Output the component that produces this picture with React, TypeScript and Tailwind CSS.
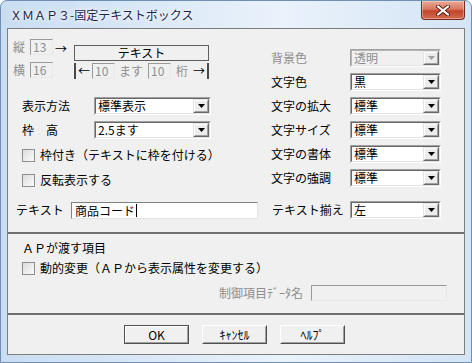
import React from "react";

const FONT = '"Noto Sans CJK JP", "Noto Sans", sans-serif';

function Tri({ disabled }: { disabled?: boolean }) {
  return (
    <svg width="7" height="4" viewBox="0 0 7 4">
      <path d="M0 0H7L3.5 4Z" fill={disabled ? "#a0a0a0" : "#000"} />
    </svg>
  );
}

function Select({ value, cls, disabled }: { value: string; cls: string; disabled?: boolean }) {
  return (
    <div
      className={`${cls} h-[18px] flex border border-t-[#a0a0a0] border-l-[#a0a0a0] border-b-white border-r-white`}
    >
      <div
        className={`flex flex-1 min-w-0 border ${
          disabled
            ? "border-t-[#b5b5b5] border-l-[#b5b5b5] border-b-[#e3e3e3] border-r-[#e3e3e3] bg-[#f0f0f0]"
            : "border-t-[#696969] border-l-[#696969] border-b-[#e3e3e3] border-r-[#e3e3e3] bg-white"
        }`}
      >
        <span
          className={`flex-1 pl-[2px] text-[12px] leading-[14px] whitespace-nowrap ${
            disabled ? "text-[#8e8e8e]" : "text-black"
          }`}
        >
          {value}
        </span>
        <div className="w-[16px] h-full flex border border-t-[#e3e3e3] border-l-[#e3e3e3] border-b-[#696969] border-r-[#696969]">
          <div className="flex-1 flex items-center justify-center bg-[#ececec] border border-t-white border-l-white border-b-[#a0a0a0] border-r-[#a0a0a0]">
            <Tri disabled={disabled} />
          </div>
        </div>
      </div>
    </div>
  );
}

function SmallInput({ v }: { v: string }) {
  return (
    <div className="w-[23px] h-[16px] border border-t-[#9a9a9a] border-l-[#9a9a9a] border-b-[#e8e8e8] border-r-[#e8e8e8] bg-[#f0f0f0] flex items-center pl-[2px]">
      <span className="text-[12px] leading-[14px] text-[#8e8e8e]">{v}</span>
    </div>
  );
}

function Check({ label }: { label: string }) {
  return (
    <div className="flex items-center h-[16px]">
      <div className="w-[13px] h-[13px] border border-[#8e8f8f] bg-[linear-gradient(135deg,#dcdcdc,#fbfbfb)]" />
      <span className="ml-[5px] text-[12px] leading-[16px] whitespace-nowrap">{label}</span>
    </div>
  );
}

function Btn({ label, def }: { label: string; def?: boolean }) {
  return (
    <div
      className={`w-[65px] h-[19px] flex border ${
        def ? "border-[#505050]" : "border-t-white border-l-white border-b-[#505050] border-r-[#505050]"
      }`}
    >
      <div
        className={`flex-1 flex items-center justify-center bg-[#f0f0f0] border ${
          def
            ? "border-t-white border-l-white border-b-[#a0a0a0] border-r-[#a0a0a0]"
            : "border-t-[#f0f0f0] border-l-[#f0f0f0] border-b-[#a0a0a0] border-r-[#a0a0a0]"
        }`}
      >
        <span className="text-[12px] leading-[14px]">{label}</span>
      </div>
    </div>
  );
}

function RightRow({ label, value, disabled }: { label: string; value: string; disabled?: boolean }) {
  return (
    <div className="flex items-center h-[18px]">
      <span
        className={`w-[79px] text-[12px] leading-[16px] whitespace-nowrap ${
          disabled ? "text-[#8e8e8e]" : "text-black"
        }`}
      >
        {label}
      </span>
      <Select value={value} cls="w-[91px]" disabled={disabled} />
    </div>
  );
}

export default function App() {
  return (
    <div
      className="w-[472px] h-[363px] flex flex-col overflow-hidden rounded-t-[7px] border border-[#6f8fb5] bg-[linear-gradient(90deg,#c9ddf2_0%,#dfebf8_40%,#eaf2fb_60%,#d3e4f5_100%)] text-black"
      style={{ fontFamily: FONT }}
    >
      {/* Title bar */}
      <div className="h-[27px] flex items-start">
        <span className="ml-[9px] mt-[6px] text-[12px] leading-[16px] text-[#1a2544] [text-shadow:0_0_6px_#fff,0_0_3px_#fff] whitespace-nowrap">
          ＸＭＡＰ３-固定テキストボックス
        </span>
        <div className="ml-auto mr-[6px] w-[44px] h-[19px] rounded-b-[4px] border border-[#7a2a1e] border-t-0 bg-[linear-gradient(180deg,#e9a996_0%,#d8785f_45%,#c3452b_55%,#d06a4f_100%)] flex items-center justify-center shadow-[inset_0_0_0_1px_rgba(255,255,255,0.35)]">
          <svg width="14" height="11" viewBox="0 0 14 11">
            <path d="M2 1.5L12 9.5M12 1.5L2 9.5" stroke="#5a2016" strokeWidth="4" strokeLinecap="round" />
            <path d="M2 1.5L12 9.5M12 1.5L2 9.5" stroke="#fff" strokeWidth="2.2" strokeLinecap="round" />
          </svg>
        </div>
      </div>

      {/* Content */}
      <div className="ml-[6px] w-[458px] h-[327px] border border-[#7d7d7d] bg-[#f0f0f0] flex flex-col">
        {/* Section 1 */}
        <div className="h-[203px] flex flex-col">
          <div className="h-[159px] flex">
            {/* Left column */}
            <div className="w-[254px] flex flex-col pt-[10px]">
              <div className="flex h-[40px] pl-[5px]">
                <div className="flex flex-col gap-[7px]">
                  <div className="flex items-center h-[16px]">
                    <span className="w-[12px] text-[12px] leading-[16px] text-[#8e8e8e]">縦</span>
                    <div className="ml-[5px]">
                      <SmallInput v="13" />
                    </div>
                  </div>
                  <div className="flex items-center h-[16px]">
                    <span className="w-[12px] text-[12px] leading-[16px] text-[#8e8e8e]">横</span>
                    <div className="ml-[5px]">
                      <SmallInput v="16" />
                    </div>
                  </div>
                </div>
                <span className="ml-[2px] mt-[2px] w-[12px] h-[16px] text-[12px] leading-[16px]">→</span>
                <div className="ml-[7px] mt-[6px] flex flex-col">
                  <div className="w-[135px] h-[16px] border border-[#5e5e5e] flex items-center justify-center">
                    <span className="text-[12px] leading-[14px]">テキスト</span>
                  </div>
                  <div className="mt-[2px] flex items-center h-[16px]">
                    <div className="w-[2px] h-[16px] bg-[#4a4a4a]" />
                    <span className="ml-[2px] w-[12px] text-[12px] leading-[16px]">←</span>
                    <div className="ml-[2px]">
                      <SmallInput v="10" />
                    </div>
                    <span className="ml-[4px] w-[24px] text-[12px] leading-[16px] text-[#8e8e8e]">ます</span>
                    <div className="ml-[5px]">
                      <SmallInput v="10" />
                    </div>
                    <span className="ml-[5px] w-[12px] text-[12px] leading-[16px] text-[#8e8e8e]">桁</span>
                    <span className="ml-[5px] w-[12px] text-[12px] leading-[16px]">→</span>
                    <div className="ml-[2px] w-[2px] h-[16px] bg-[#4a4a4a]" />
                  </div>
                </div>
              </div>

              <div className="mt-[18px] flex items-center h-[18px] pl-[14px]">
                <span className="w-[72px] text-[12px] leading-[16px]">表示方法</span>
                <Select value="標準表示" cls="w-[117px]" />
              </div>
              <div className="mt-[6px] flex items-center h-[18px] pl-[14px]">
                <span className="w-[72px] text-[12px] leading-[16px]">枠　高</span>
                <Select value="2.5ます" cls="w-[117px]" />
              </div>
              <div className="mt-[8px] pl-[14px]">
                <Check label="枠付き（テキストに枠を付ける）" />
              </div>
              <div className="mt-[9px] pl-[14px]">
                <Check label="反転表示する" />
              </div>
            </div>

            {/* Right column */}
            <div className="flex flex-col pt-[20px] pl-[9px] gap-[6px]">
              <RightRow label="背景色" value="透明" disabled />
              <RightRow label="文字色" value="黒" />
              <RightRow label="文字の拡大" value="標準" />
              <RightRow label="文字サイズ" value="標準" />
              <RightRow label="文字の書体" value="標準" />
              <RightRow label="文字の強調" value="標準" />
            </div>
          </div>

          {/* Text row */}
          <div className="mt-[13px] flex items-center h-[18px] pl-[8px]">
            <span className="w-[55px] text-[12px] leading-[16px]">テキスト</span>
            <div className="w-[187px] h-[17px] mt-[1px] border border-t-[#808080] border-l-[#808080] border-b-[#e3e3e3] border-r-[#e3e3e3] bg-white flex items-center pl-[3px]">
              <span className="text-[12px] leading-[14px]">商品コード</span>
              <span className="ml-[1px] w-[1px] h-[13px] bg-black" />
            </div>
            <span className="ml-[14px] w-[78px] text-[12px] leading-[16px] whitespace-nowrap">テキスト揃え</span>
            <Select value="左" cls="w-[91px]" />
          </div>
        </div>

        <div className="h-[2px] bg-[#6f6f6f]" />

        {/* Section 2 */}
        <div className="h-[79px] flex flex-col pt-[6px]">
          <span className="pl-[14px] text-[12px] leading-[16px]">ＡＰが渡す項目</span>
          <div className="mt-[4px] pl-[14px]">
            <Check label="動的変更（ＡＰから表示属性を変更する）" />
          </div>
          <div className="mt-[9px] flex items-center h-[16px]">
            <span className="w-[303px] pr-[8px] text-right text-[12px] leading-[16px] text-[#8e8e8e] whitespace-nowrap">
              制御項目ﾃﾞｰﾀ名
            </span>
            <div className="w-[136px] h-[16px] border border-t-[#9a9a9a] border-l-[#9a9a9a] border-b-[#e8e8e8] border-r-[#e8e8e8] bg-[#f0f0f0]" />
          </div>
        </div>

        <div className="h-[2px] bg-[#6f6f6f]" />

        {/* Section 3 */}
        <div className="h-[39px] flex pt-[10px] pl-[116px] gap-[13px]">
          <Btn label="OK" def />
          <Btn label="ｷｬﾝｾﾙ" />
          <Btn label="ﾍﾙﾌﾟ" />
        </div>
      </div>
    </div>
  );
}
